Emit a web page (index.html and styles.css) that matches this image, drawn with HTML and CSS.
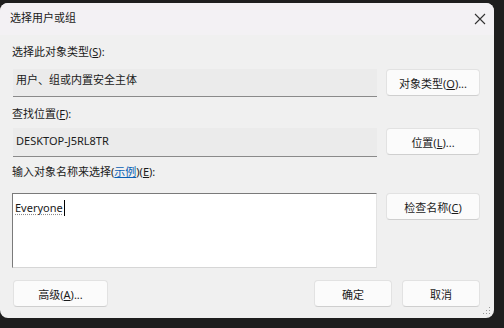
FILE: index.html
```html
<!DOCTYPE html>
<html lang="zh-CN">
<head>
    <meta charset="UTF-8">
    <title>选择用户或组</title>
    <link rel="stylesheet" href="styles.css">
</head>
<body>
    <div class="dialog">
        <div class="titlebar">
            <span class="title">选择用户或组</span>
            <svg class="close" width="12" height="12" viewBox="0 0 12 12">
                <path d="M1 1L11 11M11 1L1 11" stroke="#333" stroke-width="1.1" fill="none"/>
            </svg>
        </div>

        <div class="content">
            <div class="label">选择此对象类型(<u>S</u>):</div>
            <div class="row row-types">
                <div class="field">用户、组或内置安全主体</div>
                <button class="btn">对象类型(<u>O</u>)...</button>
            </div>

            <div class="label label-loc">查找位置(<u>F</u>):</div>
            <div class="row row-loc">
                <div class="field field-loc">DESKTOP-J5RL8TR</div>
                <button class="btn">位置(<u>L</u>)...</button>
            </div>

            <div class="label label-names">输入对象名称来选择(<a class="link">示例</a>)(<u>E</u>):</div>
            <div class="row row-names">
                <div class="textbox"><span class="typed">Everyone</span><span class="caret"></span></div>
                <button class="btn">检查名称(<u>C</u>)</button>
            </div>

            <div class="footer">
                <button class="btn btn-adv">高级(<u>A</u>)...</button>
                <div class="spacer"></div>
                <button class="btn btn-ok">确定</button>
                <button class="btn btn-cancel">取消</button>
            </div>
        </div>

        <svg class="grip" width="8" height="8" viewBox="0 0 8 8">
            <rect x="6" y="0" width="1" height="1" fill="#9a9a9a"/>
            <rect x="3" y="3" width="1" height="1" fill="#9a9a9a"/>
            <rect x="6" y="3" width="1" height="1" fill="#9a9a9a"/>
            <rect x="0" y="6" width="1" height="1" fill="#9a9a9a"/>
            <rect x="3" y="6" width="1" height="1" fill="#9a9a9a"/>
            <rect x="6" y="6" width="1" height="1" fill="#9a9a9a"/>
        </svg>
    </div>
</body>
</html>
```

FILE: styles.css
```css
html, body {
    margin: 0;
    padding: 0;
    background-color: #1e1e1e;
    font-family: "Noto Sans", "Noto Sans CJK SC", sans-serif;
    font-size: 11px;
    color: #1a1a1a;
}

.dialog {
    position: relative;
    margin-top: 3px;
    width: 494px;
    height: 315px;
    background-color: #f0f0f0;
    border-radius: 8px;
    overflow: hidden;
}

.titlebar {
    height: 32px;
    display: flex;
    align-items: center;
    justify-content: space-between;
    padding: 0 10px 0 10px;
    background-color: #f3f1f4;
}

.title {
    font-size: 11px;
    line-height: 16px;
    margin-top: -2px;
}

.close {
    margin-right: -2px;
}

.content {
    padding: 9px 14px 0 12px;
}

.label {
    line-height: 16px;
    height: 16px;
}

.label-loc {
    margin-top: 9px;
}

.label-names {
    margin-top: 7px;
}

.link {
    color: #0a5fb4;
    text-decoration: underline;
}

.row {
    display: grid;
    grid-template-columns: 1fr 94px;
    column-gap: 9px;
    align-items: start;
}

.row-types {
    margin-top: 9px;
}

.row-loc {
    margin-top: 6px;
}

.row-names {
    margin-top: 13px;
}

.field {
    margin-left: 1px;
    padding: 3px 3px 0 3px;
    line-height: 16px;
    background-color: #ebebeb;
    border-bottom: 1px solid #8a8a8a;
    box-sizing: border-box;
    height: 28px;
}

.field-loc {
    height: 29px;
    padding-top: 5px;
}

.textbox {
    height: 75px;
    box-sizing: border-box;
    background-color: #ffffff;
    border-top: 1px solid #7a7a7a;
    border-left: 1px solid #7a7a7a;
    border-right: 1px solid #e3e3e3;
    border-bottom: 1px solid #d6d6d6;
    padding: 6px 2px 0 2px;
    line-height: 16px;
    display: flex;
    align-items: flex-start;
}

.typed {
    text-decoration: underline dotted #8a8a8a;
    text-underline-offset: 2px;
}

.caret {
    display: inline-block;
    width: 1px;
    height: 16px;
    margin-left: 1px;
    background-color: #000;
}

.btn {
    height: 27px;
    padding: 0;
    font-family: inherit;
    font-size: 11px;
    color: #1a1a1a;
    background-color: #fbfbfb;
    border: 1px solid #e2e2e2;
    border-bottom-color: #cfcfcf;
    border-radius: 4px;
    box-sizing: border-box;
}

.footer {
    display: flex;
    margin-top: 12px;
    margin-left: 1px;
    gap: 10px;
}

.spacer {
    flex: 1;
}

.btn-adv {
    width: 95px;
}

.btn-ok,
.btn-cancel {
    width: 78px;
}

.grip {
    position: absolute;
    right: 3px;
    bottom: 3px;
}
```
